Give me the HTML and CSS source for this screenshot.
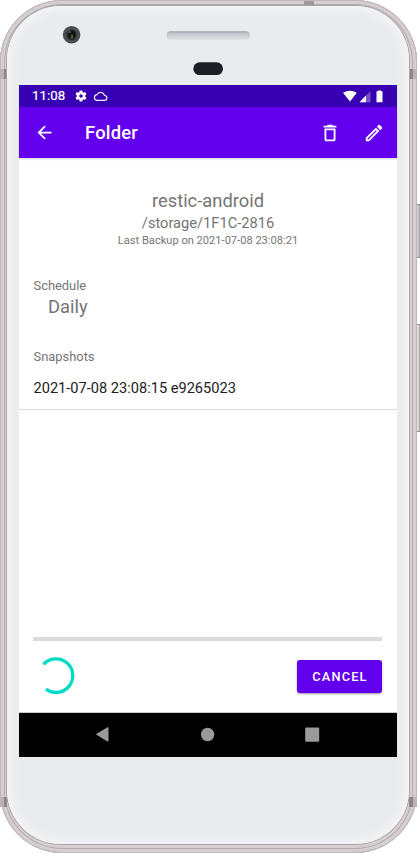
FILE: index.html
```html
<!DOCTYPE html>
<html lang="en">
<head>
<meta charset="utf-8">
<title>Folder</title>
<link rel="stylesheet" href="styles.css">
</head>
<body>
<div class="phone">
  <span class="side-key power"></span>
  <span class="side-key volume"></span>
  <div class="rim">
    <span class="seam seam-top"></span>
    <span class="seam seam-left"></span>
    <span class="seam seam-right"></span>
    <span class="seam seam-left low"></span>
    <span class="seam seam-right low"></span>
    <div class="face">
      <svg class="hardware" width="402" height="79" viewBox="7 6 402 79">
        <defs><linearGradient id="slot" x2="0" y2="1"><stop offset="0" stop-color="#9b9fa6"/><stop offset=".3" stop-color="#c5c8cc"/><stop offset="1" stop-color="#dcdee1"/></linearGradient></defs>
        <circle cx="71.6" cy="34.8" r="8.8" fill="#4b4c50"/>
        <circle cx="71.6" cy="34.8" r="5.2" fill="#27282b"/>
        <circle cx="71.8" cy="34.5" r="3.4" fill="#0f1012"/>
        <circle cx="69.5" cy="32" r="1.2" fill="#55575f"/>
        <rect x="71.2" y="34.5" width="1.6" height="4" fill="#706f3c"/>
        <rect x="166.500" y="31.200" width="83.500" height="8.600" rx="4" fill="url(#slot)"/>
        <rect x="193.300" y="62.300" width="29.700" height="12.700" rx="6.350" fill="#1b1f23"/>
      </svg>
      <main class="screen">
        <div class="status-bar">
          <span class="clock">11:08</span>
          <svg class="gear" width="14" height="14" viewBox="0 0 24 24"><path fill="#fff" fill-rule="evenodd" d="M19.140 12.940c.04-.3.060-.61.060-.94s-.02-.64-.07-.94l2.030-1.580c.18-.14.230-.41.120-.61l-1.920-3.320c-.12-.22-.37-.29-.59-.22l-2.390.96c-.5-.38-1.030-.7-1.620-.94L14.400 2.810c-.04-.24-.24-.41-.48-.41h-3.840c-.24 0-.43.170-.47.410l-.36 2.540c-.59.240-1.130.57-1.620.94l-2.390-.96c-.22-.08-.47 0-.59.220L2.740 8.870c-.12.210-.08.470.12.610l2.030 1.580c-.05.3-.09.630-.09.940s.02.640.070.940l-2.030 1.580c-.18.140-.23.410-.12.610l1.920 3.320c.12.220.37.290.59.220l2.390-.96c.5.380 1.030.7 1.620.94l.36 2.540c.05.240.240.410.480.410h3.840c.24 0 .44-.17.470-.41l.36-2.540c.59-.24 1.130-.56 1.620-.94l2.390.96c.22.080.47 0 .59-.22l1.920-3.320c.12-.22.070-.47-.12-.61zM12 15a3 3 0 1 1 0-6 3 3 0 0 1 0 6z"/></svg>
          <svg class="cloud" width="15" height="11" viewBox="0 0 15 11"><path d="M3.700 9.400h7.600a2.400 2.400 0 0 0 .2-4.900A4.100 4.100 0 0 0 3.900 3.700 2.900 2.900 0 0 0 3.700 9.400z" fill="none" stroke="#f2edfb" stroke-width="1.200"/></svg>
          <svg class="signals" width="42" height="13" viewBox="0 0 42 13">
            <path d="M0 2.700Q6.800-1.300 13.800 2.700L7 11.500z" fill="#fff"/>
            <path d="M27.500 1v11.300h-11z" fill="#7950ca"/>
            <path d="M23 5.600v6.700h-6.500z" fill="#fff"/>
            <path d="M35 1.300V.5h3v.8h1.500v11h-6v-11z" fill="#fff"/>
          </svg>
        </div>
        <header class="app-bar">
          <svg class="back" width="21" height="21" viewBox="0 0 24 24"><path fill="#fff" d="M20 11H7.830l5.590-5.590L12 4l-8 8 8 8 1.410-1.410L7.830 13H20z"/></svg>
          <h1 class="title">Folder</h1>
          <svg class="trash" width="22" height="22" viewBox="0 0 24 24"><path fill="#fff" d="M6 19c0 1.100.9 2 2 2h8c1.100 0 2-.9 2-2V7H6zM8 9h8v10H8zm7.500-5-1-1h-5l-1 1H5v2h14V4z"/></svg>
          <svg class="pencil" width="22" height="22" viewBox="0 0 24 24"><path fill="#fff" d="m14.060 9.020.92.920L5.920 19H5v-.92zM17.660 3c-.25 0-.51.100-.7.290l-1.830 1.830 3.750 3.750 1.830-1.830c.39-.39.390-1.020 0-1.410l-2.340-2.340c-.2-.2-.45-.29-.71-.29zm-3.600 3.190L3 17.250V21h3.750L17.810 9.940z"/></svg>
        </header>
        <section class="content">
          <div class="repo">
            <div class="repo-name">restic-android</div>
            <div class="repo-path">/storage/1F1C-2816</div>
            <div class="repo-last">Last Backup on 2021-07-08 23:08:21</div>
          </div>
          <div class="label">Schedule</div>
          <div class="schedule">Daily</div>
          <div class="label snapshots">Snapshots</div>
          <div class="snapshot">2021-07-08 23:08:15 e9265023</div>
          <div class="progress"></div>
          <div class="actions">
            <svg class="spinner" width="40" height="40" viewBox="0 0 40 40"><path d="M6.500 8.400A16.800 16.800 0 1 1 8.900 33.100" fill="none" stroke="#03dac5" stroke-width="3.300"/></svg>
            <button class="cancel">CANCEL</button>
          </div>
        </section>
        <nav class="nav-bar">
          <svg width="378" height="44" viewBox="19 713 378 44" fill="#9a9a9a"><path d="M95.800 734.200 107.500 727.300q1-.5 1 .6v13q0 1-1 .5z"/><circle cx="207.600" cy="734.500" r="6.700"/><rect x="305.200" y="727.400" width="14" height="14.400" rx=".8"/></svg>
        </nav>
      </main>
    </div>
  </div>
</div>
</body>
</html>
```

FILE: styles.css
```css
* { box-sizing: border-box; }
body {
  margin: 0;
  background: #fff;
  font-family: Roboto, sans-serif;
  overflow: hidden;
}
svg { display: block; flex: none; }
.phone { position: relative; width: 420px; height: 853px; }
.side-key {
  position: absolute;
  left: 415px;
  width: 5px;
  border: 1px solid #aaa6a6;
  border-top-color: #8f8b8c;
  border-bottom-color: #8f8b8c;
  background: #c9cacb;
}
.power { top: 204px; height: 54px; }
.volume { top: 324px; height: 108px; background: #dddad8; }
.rim {
  position: relative;
  width: 417px;
  height: 853px;
  padding: 6px 8px 9px 7px;
  border-radius: 62px;
  background: #d6cfd1;
  box-shadow: inset 0 0 0 1px #bfb7ba, inset 0 0 0 4px #d6cfd1, inset 0 0 0 5px #b3abae, inset 0 -3px 0 1px #8d8387;
}
.seam { position: absolute; background: #a0979b; }
.seam-top { left: 304px; top: 1px; width: 10px; height: 4px; }
.seam-left { left: 0; top: 69px; width: 7px; height: 10px; background: linear-gradient(90deg, #bbb3b6 60%, #8e8589 60%); }
.seam-right { right: 0; top: 69px; width: 8px; height: 10px; background: linear-gradient(270deg, #bbb3b6 50%, #8e8589 50%); }
.low { top: 797px; }
.face {
  position: relative;
  width: 402px;
  height: 838px;
  border-radius: 54px;
  background: #eaebed;
  box-shadow: 0 0 0 1px #aaa5a8, inset 0 0 9px 4px #f5f5f7;
}
.screen {
  width: 378px;
  height: 672px;
  margin-left: 12px;
  display: flex;
  flex-direction: column;
  background: #fff;
}
.status-bar {
  height: 22px;
  flex: none;
  display: flex;
  align-items: center;
  padding: 0 12px 0 13px;
  background: #3700b3;
  color: #fff;
}
.clock { width: 42px; font-size: 13.200px; font-weight: 400; line-height: 22px; letter-spacing: .1px; -webkit-text-stroke: .2px #fff; }
.cloud { margin-left: 5px; }
.signals { margin-left: auto; }
.app-bar {
  height: 51px;
  flex: none;
  display: flex;
  align-items: center;
  padding: 0 12px 0 15px;
  background: #6200ee;
  color: #fff;
  box-shadow: 0 1px 2px rgba(0, 0, 0, .18);
}
.title { margin: 0 auto 0 30px; font-size: 18.400px; line-height: 24px; font-weight: 500; letter-spacing: .2px; padding-top: 1px; }
.pencil { margin-left: 22px; }
.content {
  flex: 1;
  display: flex;
  flex-direction: column;
  padding-top: 31px;
  border-bottom: 1px solid #ccc;
  color: #757575;
}
.repo { text-align: center; white-space: nowrap; }
.repo-name { font-size: 18.350px; line-height: 24px; }
.repo-path { font-size: 14.650px; line-height: 20px; }
.repo-last { font-size: 11.100px; line-height: 15px; }
.label { margin: 30px 14px 0 14.500px; font-size: 12.900px; line-height: 16px; }
.schedule { margin-left: 29px; font-size: 18.350px; line-height: 26px; }
.snapshots { margin-top: 29px; }
.snapshot {
  height: 45px;
  padding: 0 14px 0 14.500px;
  border-bottom: 1px solid #dcdcdc;
  color: #212121;
  font-size: 14.600px;
  line-height: 46px;
}
.progress { height: 4px; margin: auto 15px 0 14px; background: #dadada; }
.actions {
  height: 71px;
  display: flex;
  align-items: center;
  justify-content: space-between;
  padding: 0 15px 1px 18px;
}
.cancel {
  width: 85px;
  height: 33px;
  padding: 1px 0 0 1px;
  border: 0;
  border-radius: 3px;
  background: #6200ee;
  color: #fff;
  font: 500 12.800px/32px Roboto, sans-serif;
  letter-spacing: 1.150px;
  box-shadow: 0 1px 2px rgba(0, 0, 0, .4);
}
.nav-bar { height: 44px; flex: none; background: #000; }
```
